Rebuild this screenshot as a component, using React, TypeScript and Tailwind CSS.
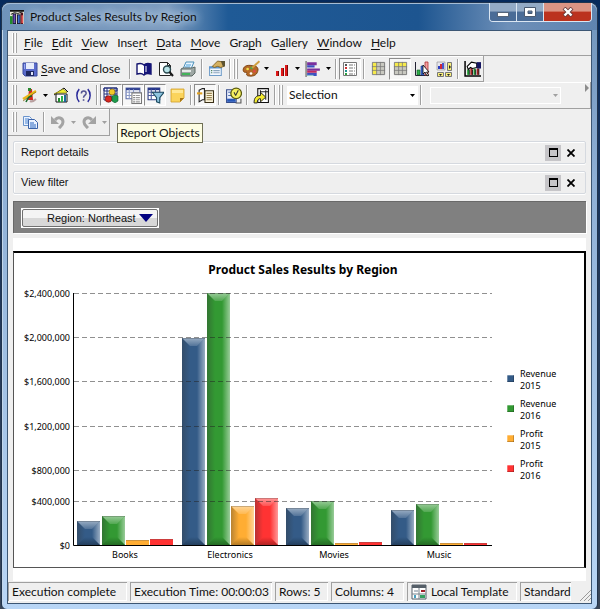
import type { ReactNode } from 'react';
import { clsx } from 'clsx';

const MENUS = [
  { before: '', key: 'F', after: 'ile' },
  { before: '', key: 'E', after: 'dit' },
  { before: '', key: 'V', after: 'iew' },
  { before: 'Inse', key: 'r', after: 't' },
  { before: '', key: 'D', after: 'ata' },
  { before: '', key: 'M', after: 'ove' },
  { before: 'Gra', key: 'p', after: 'h' },
  { before: 'G', key: 'a', after: 'llery' },
  { before: '', key: 'W', after: 'indow' },
  { before: '', key: 'H', after: 'elp' },
];

const SERIES = [
  { name: 'Revenue', year: '2015', color: '#345b87' },
  { name: 'Revenue', year: '2016', color: '#339933' },
  { name: 'Profit', year: '2015', color: '#ffad33' },
  { name: 'Profit', year: '2016', color: '#ff3333' },
];

const GRID = [
  { y: 8, label: '$2,400,000' },
  { y: 52, label: '$2,000,000' },
  { y: 96, label: '$1,600,000' },
  { y: 141, label: '$1,200,000' },
  { y: 185, label: '$800,000' },
  { y: 216, label: '$400,000' },
];

const BASE = 260;

const GROUPS = [
  { name: 'Books', x: 63, heights: [24, 29, 5, 6] },
  { name: 'Electronics', x: 168, heights: [207, 252, 39, 47] },
  { name: 'Movies', x: 272, heights: [37, 44, 2, 3] },
  { name: 'Music', x: 377, heights: [35, 41, 2, 2] },
];

function Icon({ children, className = 'size-4' }: { children: ReactNode; className?: string }) {
  return (
    <svg viewBox="0 0 16 16" className={clsx('shrink-0', className)} fill="none" aria-hidden="true">
      {children}
    </svg>
  );
}

function AppIcon() {
  return (
    <Icon className="size-[14px]">
      <path d="M0 0h16v16H0z" fill="#e8e8d8" />
      <path d="M0 0h16v2H0z" fill="#111" />
      <path d="M0 7h3v9H0z" fill="#1e8a2c" />
      <path d="M3 4h4v12H3z" fill="#181830" />
      <path d="M4 5h2v10H4z" fill="#6a4ab8" />
      <path d="M8 5h4v11H8z" fill="#181830" />
      <path d="M9 6h2v9H9z" fill="#3f6fd0" />
      <path d="M12 3h3v13h-3z" fill="#4a1018" />
      <path d="M13 6h2v9h-2z" fill="#e05050" />
      <path d="M1 5l4-2 4 1 5-2" stroke="#111" />
    </Icon>
  );
}

function SaveIcon() {
  return (
    <Icon>
      <path d="M1 2h14v13H3l-2-2z" fill="#5a6ccc" stroke="#3a4a9e" />
      <path d="M4 2h8v6H4z" fill="#e6ecfb" />
      <path d="M4 10h8v5H4z" fill="#1e285f" />
      <path d="M9 11h2v3H9z" fill="#dfe5fa" />
      <path d="M2 3h1v5H2z" fill="#9aaaf0" />
    </Icon>
  );
}

function BookIcon() {
  return (
    <Icon>
      <path d="M1 3c3-1 5-1 7 1 2-2 4-2 7-1v10c-3-1-5-1-7 1-2-2-4-2-7-1z" fill="#fff" stroke="#14146e" strokeWidth="1.4" />
      <path d="M8 4c2-2 4-2 7-1v10c-3-1-5-1-7 1z" fill="#14147a" />
      <path d="M10 5v6" stroke="#fff" />
    </Icon>
  );
}

function PreviewIcon() {
  return (
    <Icon>
      <path d="M1.500 1.500h8l3 3v10h-11z" fill="#fff" stroke="#222" />
      <path d="M9.500 1.500v3h3" stroke="#222" />
      <circle cx="9" cy="8.500" r="3.500" fill="#b9e4e8" stroke="#2c4a50" strokeWidth="1.400" />
      <path d="M11.500 11l3.500 4" stroke="#1a1a1a" strokeWidth="2" />
    </Icon>
  );
}

function PrintIcon() {
  return (
    <Icon>
      <path d="M6 1h8l-3 7H3z" fill="#e8f4ff" stroke="#4a90b8" />
      <path d="M6 4h5M5 6h5" stroke="#48a0d8" />
      <path d="M1 8l2-1h9l3-1v6l-3 3H1z" fill="#9ea7a4" stroke="#5c6864" />
      <path d="M2 9h9v2H2z" fill="#e6ebe8" />
      <path d="M2 12h8v2H2z" fill="#43b45a" />
    </Icon>
  );
}

function PropertiesIcon() {
  return (
    <Icon className="size-[17px]">
      <path d="M1.500 6.500h11v8h-11z" fill="#f3f8ff" stroke="#6f9cc8" />
      <path d="M1 6h12v2H1z" fill="#5b95d0" />
      <path d="M5 10h6M5 12h6" stroke="#8aa4bd" />
      <path d="M3 10h1M3 12h1" stroke="#286a3c" />
      <path d="M6 4l3-3 6 1v4l-3 1-3-1-3 1-2-1z" fill="#d4b060" stroke="#7a5c20" strokeWidth=".8" />
      <path d="M12 1h4v5h-2z" fill="#5d5330" />
    </Icon>
  );
}

function PaletteIcon() {
  return (
    <Icon className="size-[18px]">
      <path d="M1 9c0-3 3-5 8-4 4 0 6 2 5 5-1 4-5 5-9 4-2-1 0-2-1-3-1 0-3 0-3-2z" fill="#b56a28" stroke="#7b4212" strokeWidth=".8" />
      <circle cx="5" cy="8" r="1.200" fill="#f1e14c" />
      <circle cx="8.500" cy="7" r="1.200" fill="#48a848" />
      <circle cx="11" cy="10" r="1.200" fill="#e04848" />
      <circle cx="8" cy="12" r="1.200" fill="#fff" />
      <path d="M15.500 1L9 7" stroke="#d0a040" strokeWidth="1.800" />
    </Icon>
  );
}

function RedBarsIcon() {
  return (
    <Icon>
      <path d="M2 10h3v5H2zM7 7h3v8H7zM11 4h3v11h-3z" fill="#e01818" />
      <path d="M4 10h1v5H4zM9 7h1v8H9zM13 4h1v11h-1z" fill="#7a0808" />
    </Icon>
  );
}

function HBarsIcon() {
  return (
    <Icon className="size-[17px]">
      <path d="M1 1v15" stroke="#555" />
      <path d="M2 2h9v3H2zM2 8h12v2H2z" fill="#7a2f9c" />
      <path d="M2 5h7v2H2zM2 12h9v3H2z" fill="#3c4fc0" />
      <path d="M2 10h9v2H2z" fill="#c02a60" />
      <path d="M2 14h6v1H2z" fill="#9cc" />
    </Icon>
  );
}

function ListIcon() {
  return (
    <Icon>
      <path d="M1.500 1.500h13v13h-13z" fill="#fff" stroke="#777" />
      <path d="M3 3h2v2H3z" fill="#555" />
      <path d="M3 6h2v2H3z" fill="#d03030" />
      <path d="M3 9h2v2H3z" fill="#209090" />
      <path d="M3 12h2v2H3z" fill="#30a040" />
      <path d="M7 4h6M7 7h6M7 10h6M7 13h6" stroke="#777" strokeDasharray="4 1" />
    </Icon>
  );
}

function TableIcon({ header = false }: { header?: boolean }) {
  return (
    <Icon className="size-[15px]">
      <path d="M1.500 1.500h13v13h-13z" fill="#c8c8c0" stroke="#777" />
      <path d={header ? 'M2 2h12v4H2z' : 'M2 2h4v12H2z'} fill="#f6ea4a" />
      <path d="M1 6h14M1 10h14M6 1v14M10 1v14" stroke="#777" strokeWidth=".8" />
    </Icon>
  );
}

function PickIcon() {
  return (
    <Icon>
      <path d="M1.500 1v13.500H15" stroke="#223" />
      <path d="M3 9h3v5H3z" fill="#2fb04a" stroke="#0d5a22" strokeWidth=".6" />
      <path d="M7 5h3v9H7z" fill="#3d6cd8" stroke="#17307c" strokeWidth=".6" />
      <path d="M11 1h3v13h-3z" fill="#f2a0a0" stroke="#b03030" strokeWidth=".8" />
      <path d="M9 4v9l2-2 2 4 1.500-1-2-3H15z" fill="#fff" stroke="#000" strokeWidth=".8" />
    </Icon>
  );
}

function LayoutIcon() {
  return (
    <Icon>
      <path d="M1 1h8v8H1z" fill="#e6e6ee" stroke="#888" strokeWidth=".6" />
      <path d="M2 5h2v3H2z" fill="#2a3cc0" />
      <path d="M4 3h2v5H4z" fill="#d02838" />
      <path d="M6 2h2v6H6z" fill="#4858d0" />
      <path d="M11.500 1.500h4v8h-4zM1.500 11.500h6v4h-6zM9.500 11.500h6v4h-6z" fill="#f7ee7a" stroke="#777" />
      <path d="M13 4l2 2-2 2zM3 13h3l-1.500 2zM11 13h3l-1.500 2z" fill="#222" />
    </Icon>
  );
}

function HandChartIcon() {
  return (
    <Icon className="size-[17px]">
      <path d="M1 1v14h15" stroke="#000" strokeWidth="1.400" />
      <path d="M3 9h2v5H3z" fill="#1c9a30" />
      <path d="M6 7h2v7H6z" fill="#a02020" />
      <path d="M9 8h2v6H9z" fill="#208a30" />
      <path d="M12 8h2v6h-2z" fill="#a02020" />
      <path d="M5 9v5M8 9v5M11 9v5M14 8v6" stroke="#111" strokeWidth=".8" />
      <path d="M3 6l4-4 5 1v4l-4 1-2-1-2 2z" fill="#fff" stroke="#000" />
      <path d="M12 2h4v6h-4z" fill="#151560" />
    </Icon>
  );
}

function WizardIcon() {
  return (
    <Icon>
      <path d="M7 2h3l1 11H6z" fill="#d02a20" />
      <path d="M6 1h3v3H6z" fill="#2a8a30" />
      <path d="M1 12L14 4" stroke="#e8b818" strokeWidth="2.400" />
      <path d="M1 14L14 5" stroke="#7a5a08" strokeWidth=".7" />
      <path d="M4 15c2-4 3-6 6-6" stroke="#186a28" strokeWidth="1.600" />
      <path d="M8 14c2 1 4 0 6-2" stroke="#b8a0a0" strokeWidth="2" />
    </Icon>
  );
}

function HouseChartIcon() {
  return (
    <Icon>
      <path d="M3 7h11v8H3z" fill="#fff" stroke="#111" />
      <path d="M1 8l10-7 4 4" stroke="#111" strokeWidth="1" />
      <path d="M1 7l9-5 4 3-1 1H4z" fill="#f0ee30" stroke="#77700c" strokeWidth=".6" />
      <path d="M5 11h2v4H5z" fill="#208a30" />
      <path d="M8 9h2v6H8z" fill="#2fb04a" />
      <path d="M11 8h2v7h-2z" fill="#1b6a9a" />
    </Icon>
  );
}

function HelpIcon() {
  return (
    <Icon className="size-[17px]">
      <path d="M4 2C1 5 1 11 4 14M12 2c3 3 3 9 0 12" stroke="#2a2a9a" strokeWidth="1.400" />
      <path d="M6 6c0-3 4.500-3 4.500 0 0 1.500-2.500 1.800-2.500 4" stroke="#555592" strokeWidth="1.400" />
      <path d="M7.300 11.500h1.500v1.500H7.300z" fill="#555592" />
    </Icon>
  );
}

function ObjectsIcon() {
  return (
    <Icon>
      <path d="M1 1h13v12H1z" fill="#fff" stroke="#222a6a" />
      <path d="M1 1h13v3H1zM4 1v12M8 1v12M12 1v12M1 7h13M1 10h13" stroke="#223080" />
      <circle cx="9" cy="5" r="3" fill="#f0c828" stroke="#806008" strokeWidth=".6" />
      <circle cx="5.500" cy="12" r="3.300" fill="#d82820" stroke="#6a0c08" strokeWidth=".6" />
      <path d="M9 9l3-1 3 1v5l-3 2-3-2z" fill="#1f9a4c" stroke="#0c5a28" strokeWidth=".6" />
    </Icon>
  );
}

function DetailsIcon() {
  return (
    <Icon className="size-[17px]">
      <path d="M1 1h13v10H1z" fill="#fff" stroke="#5a6aa8" />
      <path d="M1 1h13v2H1z" fill="#2f4090" />
      <path d="M4 2v9M8 2v4M1 5h13M1 8h5" stroke="#8a9ac8" />
      <path d="M6.500 5.500h9v10h-9z" fill="#fff" stroke="#777" />
      <path d="M8 8h1M8 10h1M8 12h1M8 14h1" stroke="#333" />
      <path d="M10 8h4M10 10h4M10 12h4M10 14h4" stroke="#999" />
    </Icon>
  );
}

function FilterIcon() {
  return (
    <Icon className="size-[17px]">
      <path d="M1 1h11v11H1z" fill="#fff" stroke="#2a3a80" />
      <path d="M1 1h11v2H1z" fill="#24348a" />
      <path d="M4 2v10M8 2v4M1 5h11M1 8h6" stroke="#4a5a9a" />
      <path d="M5 5h11l-4 5v5l-3-1v-4z" fill="#8ec4de" stroke="#1c4a60" />
    </Icon>
  );
}

function NoteIcon() {
  return (
    <Icon>
      <path d="M2 2h13v9l-4 4H2z" fill="#fbd45c" stroke="#d0a028" strokeWidth=".8" />
      <path d="M15 11l-4 4v-4z" fill="#a87818" />
      <path d="M3 3h11v3H3z" fill="#ffe896" />
    </Icon>
  );
}

function NotebookIcon() {
  return (
    <Icon className="size-[17px]">
      <path d="M2 3l3-1.500h2V12H5l-3 2z" fill="#fff" stroke="#222" />
      <path d="M7.500 3.500h8v11h-8z" fill="#fbf4dc" stroke="#3a3018" />
      <path d="M9 6h5M9 8h5M9 10h5M9 12h5" stroke="#9a8450" />
      <path d="M0 6h5" stroke="#e0a020" strokeWidth="2" />
    </Icon>
  );
}

function ClockIcon() {
  return (
    <Icon className="size-[17px]">
      <path d="M1.500 2.500h9v12h-9z" fill="#e8eefc" stroke="#334a88" />
      <path d="M2 11h8v3H2z" fill="#2858b8" />
      <path d="M3 5h4M3 8h3" stroke="#5070b0" />
      <path d="M10 15h5v-4" stroke="#555" />
      <circle cx="10.500" cy="6" r="5" fill="#f6f060" stroke="#5a5a10" strokeWidth="1.200" />
      <path d="M10 8l2.500-5M10 8L8.500 5" stroke="#333" />
    </Icon>
  );
}

function RefreshDocIcon() {
  return (
    <Icon className="size-[17px]">
      <path d="M4.500 1.500h10v13h-10z" fill="#fff" stroke="#111" />
      <path d="M7.500 4.500h7M7 3v4M12 3v9" stroke="#222" />
      <path d="M1 15c0-5 2-7 6-7V5l5 4.500L7 14v-3c-2 0-3 1-3 4z" fill="#f4ec30" stroke="#222" strokeWidth=".9" />
    </Icon>
  );
}

function CopyIcon() {
  return (
    <Icon>
      <path d="M1.500 2.500h6l2 2v7h-8z" fill="#eaf2ff" stroke="#6a94cc" />
      <path d="M3 5h4M3 7h5M3 9h4" stroke="#4c86d0" />
      <path d="M6.500 5.500h6l3 3v6h-9z" fill="#eaf2ff" stroke="#3a62a8" />
      <path d="M8 9h4M8 11h6M8 13h6" stroke="#2a66c0" />
    </Icon>
  );
}

function UndoIcon({ flip = false }: { flip?: boolean }) {
  return (
    <Icon>
      <g transform={flip ? 'matrix(-1 0 0 1 16 0)' : undefined}>
        <path d="M5 6c3-4 8-2 8 2 0 3-2 4-4 6" stroke="#a3a3a3" strokeWidth="3" />
        <path d="M1 2v8h8z" fill="#a3a3a3" />
      </g>
    </Icon>
  );
}

function TemplateIcon() {
  return (
    <Icon>
      <path d="M1 1h14v14H1z" fill="#fff" stroke="#555f68" />
      <path d="M1 1h14v3H1z" fill="#555f68" />
      <path d="M8 4v11M1 10h14" stroke="#78828a" />
      <path d="M10 6h4v2h-4z" fill="#a02028" />
      <path d="M3 6h4v2H3z" fill="#b8c0c8" />
      <path d="M3 11h2v3H3z" fill="#48a0c0" />
      <path d="M9 11h5v3H9z" fill="#34a060" />
    </Icon>
  );
}

function Grip() {
  return (
    <span className="mr-0.5 flex h-5 w-[5px] shrink-0 justify-between">
      <span className="w-0.5 border-l border-white bg-[#a5a5a5]" />
      <span className="w-0.5 border-l border-white bg-[#a5a5a5]" />
    </span>
  );
}

function Separator() {
  return <span className="mx-0.5 h-5 w-0.5 shrink-0 border-r border-white bg-[#a0a0a0]" />;
}

function Arrow({ disabled = false }: { disabled?: boolean }) {
  return (
    <svg viewBox="0 0 7 4" className={clsx('h-[3px] w-[5px]', disabled ? 'fill-[#a0a0a0]' : 'fill-black')} aria-hidden="true">
      <path d="M0 0h7L3.500 4z" />
    </svg>
  );
}

type ToolProps = { label: string; children: ReactNode; pressed?: boolean; disabled?: boolean };

function Tool({ label, children, pressed = false, disabled = false }: ToolProps) {
  return (
    <button
      type="button"
      aria-label={label}
      disabled={disabled}
      className={clsx(
        'flex h-[22px] w-[22px] shrink-0 items-center justify-center',
        pressed && 'border border-r-white border-b-white border-l-[#8c8c8c] border-t-[#8c8c8c] bg-[#f7f7f7]',
      )}
    >
      {children}
    </button>
  );
}

function DropArrow({ label, disabled = false }: { label: string; disabled?: boolean }) {
  return (
    <button type="button" aria-label={label} disabled={disabled} className="flex h-[22px] w-[9px] shrink-0 items-center justify-center">
      <Arrow disabled={disabled} />
    </button>
  );
}

function ToolGroup({ children, className }: { children: ReactNode; className?: string }) {
  return (
    <div className={clsx('flex items-center border-b border-[#a0a0a0] pl-1 shadow-[inset_0_1px_0_#fff]', className)}>{children}</div>
  );
}

function Panel({ title }: { title: string }) {
  return (
    <section className="flex h-[23px] items-center rounded-xs border border-[#d5d9df] pl-[7px] pr-1.5 shadow-[inset_1px_1px_0_#fff,0_1px_0_#fff]">
      <h2 className="flex-1 font-['Liberation_Sans',sans-serif] text-[11px]">{title}</h2>
      <button type="button" aria-label={`Maximize ${title}`} className="flex size-4 items-center justify-center bg-[#c6c5c8]">
        <span className="h-[9px] w-[9px] border border-t-2 border-black" />
      </button>
      <button type="button" aria-label={`Close ${title}`} className="ml-0.5 flex size-4 items-center justify-center">
        <svg viewBox="0 0 8 8" className="size-2" fill="none" stroke="#000" strokeWidth="1.800">
          <path d="M.5.500l7 7M7.500.500l-7 7" />
        </svg>
      </button>
    </section>
  );
}

function Bar({ x, height, color }: { x: number; height: number; color: string }) {
  const w = 23;
  const y = BASE - height;
  const d = Math.min(8, height / 2);
  if (height < 8) {
    return (
      <g>
        <rect x={x} y={y} width={w} height={height} fill={color} />
        <rect x={x} y={y} width={w} height={1} fill="#555" opacity=".3" />
      </g>
    );
  }
  return (
    <g>
      <rect x={x} y={y} width={w} height={height} fill={color} />
      <polygon points={`${x},${y} ${x + d},${y + d} ${x + d},${BASE - d} ${x},${BASE}`} fill="url(#bevel-left)" />
      <polygon points={`${x + w},${y} ${x + w - d},${y + d} ${x + w - d},${BASE - d} ${x + w},${BASE}`} fill="url(#bevel-right)" />
      <polygon points={`${x},${y} ${x + w},${y} ${x + w - d},${y + d} ${x + d},${y + d}`} fill="url(#bevel-top)" />
      <polygon points={`${x},${BASE} ${x + w},${BASE} ${x + w - d},${BASE - d} ${x + d},${BASE - d}`} fill="url(#bevel-bottom)" />
      <rect x={x} y={y} width={w} height={1} fill="#000" opacity=".2" />
    </g>
  );
}

function SalesChart() {
  return (
    <svg viewBox="0 0 478 282" className="min-w-0 flex-1 font-['Noto_Sans',sans-serif] text-[9px]" role="img" aria-label="Product sales by region">
      <defs>
        <linearGradient id="bevel-left">
          <stop offset="0" stopColor="#333" stopOpacity=".35" />
          <stop offset="1" stopColor="#333" stopOpacity="0" />
        </linearGradient>
        <linearGradient id="bevel-right">
          <stop offset="0" stopColor="#fff" stopOpacity="0" />
          <stop offset="1" stopColor="#fff" stopOpacity=".5" />
        </linearGradient>
        <linearGradient id="bevel-top" x2="0" y2="1">
          <stop offset="0" stopColor="#fff" stopOpacity=".5" />
          <stop offset="1" stopColor="#fff" stopOpacity=".15" />
        </linearGradient>
        <linearGradient id="bevel-bottom" x2="0" y2="1">
          <stop offset="0" stopColor="#000" stopOpacity="0" />
          <stop offset="1" stopColor="#000" stopOpacity=".3" />
        </linearGradient>
      </defs>
      {GROUPS.map((group) => (
        <g key={group.name}>
          {group.heights.map((height, i) => (
            <Bar key={i} x={group.x + i * 24 + (i ? 1 : 0)} height={height} color={SERIES[i].color} />
          ))}
          <text x={group.x + 48} y={BASE + 13} textAnchor="middle">
            {group.name}
          </text>
        </g>
      ))}
      {GRID.map((line) => (
        <g key={line.label}>
          <path d={`M60 ${line.y + 0.5}H478`} stroke="#222" strokeOpacity=".5" strokeDasharray="5 3" />
          <text x="56" y={line.y + 4} textAnchor="end">
            {line.label}
          </text>
        </g>
      ))}
      <text x="56" y={BASE + 4} textAnchor="end">
        $0
      </text>
      <path d={`M59.500 8V${BASE + 0.5}H478`} stroke="#000" fill="none" />
    </svg>
  );
}

function StatusCell({ children, className }: { children: ReactNode; className?: string }) {
  return (
    <div className={clsx('flex h-[19px] items-center gap-1 overflow-hidden whitespace-nowrap border-l border-t border-[#a0a0a0] pl-[3px] shadow-[inset_-1px_-1px_0_#fff]', className)}>
      {children}
    </div>
  );
}

export default function App() {
  return (
    <div className="bg-[#10284a] bg-linear-to-b from-[#062a5c] to-[#3a4658] pt-0.5 pr-0.5 pl-px font-['Lato',sans-serif] text-[12px] text-[#111]">
      <div className="rounded-t-lg rounded-b-md border border-[#20344e] bg-linear-to-b from-[#6f93ba] via-[#8fb0d6] via-30% to-[#b9d6f6] shadow-[inset_1px_1px_0_#c3d6ea]">
        <header className="flex h-[27px] items-center rounded-t-lg bg-linear-[90deg,#6f93ba_0%,#7c9cc0_28%,#1f5a96_38%,#1d5590_70%,#6d8fb8_85%,#5f84b0_100%] pl-2 pr-[5px] shadow-[inset_0_1px_0_#a5bdd6]">
          <AppIcon />
          <h1 className="ml-1.5 [text-shadow:0_0_8px_#dce9f6,0_0_10px_#c5d8ec]">Product Sales Results by Region</h1>
          <div className="ml-auto flex h-[19px] self-start overflow-hidden rounded-b border border-t-0 border-[#dbe6f2]">
            <button type="button" aria-label="Minimize" className="flex w-[27px] items-center justify-center border-r border-[#dbe6f2] bg-linear-to-b from-[#94abc6] from-45% to-[#4a6c97] to-50%">
              <span className="mt-1 h-[5px] w-3 border border-[#55657a] bg-white" />
            </button>
            <button type="button" aria-label="Restore" className="flex w-[27px] items-center justify-center border-r border-[#dbe6f2] bg-linear-to-b from-[#94abc6] from-45% to-[#4a6c97] to-50%">
              <svg viewBox="0 0 12 10" className="h-[10px] w-3" fill="#fff" stroke="#4a5a70">
                <path d="M.5.500h11v9H.500zM4 4h4v2.500H4z" fillRule="evenodd" />
              </svg>
            </button>
            <button type="button" aria-label="Close" className="flex w-[47px] items-center justify-center bg-linear-to-b from-[#dc9484] from-45% to-[#bb321e] to-50%">
              <svg viewBox="0 0 12 10" className="h-[10px] w-3" fill="none">
                <path d="M2 1l8 8M10 1L2 9" stroke="#6a3a3a" strokeWidth="4" />
                <path d="M2.500 1.500l7 7M9.500 1.500l-7 7" stroke="#fff" strokeWidth="2.400" />
              </svg>
            </button>
          </div>
        </header>

        <div className="mx-[5px] mb-[5px] border border-[#3c5674] bg-[#efefef]">
          <nav className="flex h-[25px] items-center border-b border-[#a0a0a0] pl-1">
            <Grip />
            <div className="ml-[5px] flex gap-[9px]">
              {MENUS.map((menu) => (
                <button key={menu.before + menu.key + menu.after} type="button">
                  {menu.before}
                  <span className="underline underline-offset-2">{menu.key}</span>
                  {menu.after}
                </button>
              ))}
            </div>
          </nav>

          <ToolGroup className="h-[26px] w-fit border-r">
            <Grip />
            <button type="button" className="ml-[3px] mr-0.5 flex h-[22px] w-[103px] shrink-0 items-center gap-[3px] whitespace-nowrap">
              <SaveIcon />
              <span>
                <span className="underline underline-offset-2">S</span>ave and Close
              </span>
            </button>
            <Separator />
            <Tool label="Data dictionary"><BookIcon /></Tool>
            <Tool label="Print preview"><PreviewIcon /></Tool>
            <Tool label="Print"><PrintIcon /></Tool>
            <Separator />
            <Tool label="Properties"><PropertiesIcon /></Tool>
            <Separator />
            <Grip />
            <Tool label="Palette"><PaletteIcon /></Tool>
            <DropArrow label="Palette options" />
            <Tool label="Chart type"><RedBarsIcon /></Tool>
            <DropArrow label="Chart type options" />
            <Tool label="Bar orientation"><HBarsIcon /></Tool>
            <DropArrow label="Bar orientation options" />
            <Separator />
            <Tool label="Legend" pressed><ListIcon /></Tool>
            <Separator />
            <Tool label="Table columns"><TableIcon /></Tool>
            <Tool label="Table headers" pressed><TableIcon header /></Tool>
            <Tool label="Select chart item"><PickIcon /></Tool>
            <Tool label="Chart layout"><LayoutIcon /></Tool>
            <Separator />
            <Tool label="Customize chart"><HandChartIcon /></Tool>
          </ToolGroup>

          <ToolGroup className="h-[27px] border-r">
            <Grip />
            <Tool label="Wizard"><WizardIcon /></Tool>
            <DropArrow label="Wizard options" />
            <Tool label="Home report"><HouseChartIcon /></Tool>
            <Tool label="Help"><HelpIcon /></Tool>
            <Separator />
            <Tool label="Report Objects" pressed><ObjectsIcon /></Tool>
            <Tool label="Report details" pressed><DetailsIcon /></Tool>
            <Tool label="View filter" pressed><FilterIcon /></Tool>
            <Tool label="Notes"><NoteIcon /></Tool>
            <Separator />
            <Tool label="Page-by" pressed><NotebookIcon /></Tool>
            <Separator />
            <Tool label="Schedule"><ClockIcon /></Tool>
            <Separator />
            <Tool label="Re-execute"><RefreshDocIcon /></Tool>
            <Separator />
            <Grip />
            <div className="relative ml-0.5 flex w-[131px] shrink-0 items-center">
              <select aria-label="Style" className="h-[19px] w-full appearance-none bg-white pl-0.5 leading-4">
                <option>Selection</option>
              </select>
              <span className="pointer-events-none absolute right-[3px]">
                <Arrow />
              </span>
            </div>
            <Separator />
            <div className="relative ml-1.5 flex w-[131px] shrink-0 items-center">
              <select aria-label="Size" disabled className="h-[17px] w-full appearance-none border border-white bg-[#efefef]">
                <option></option>
              </select>
              <span className="pointer-events-none absolute right-[3px]">
                <Arrow disabled />
              </span>
            </div>
            <button type="button" aria-label="More tools" className="ml-auto mr-px mt-0.5 self-start">
              <svg viewBox="0 0 4 8" className="h-2 w-1 fill-[#8c8c8c]">
                <path d="M0 0l4 4-4 4z" />
              </svg>
            </button>
          </ToolGroup>

          <div className="relative">
            <ToolGroup className="h-[27px] w-fit border-r">
              <Grip />
              <Tool label="Copy"><CopyIcon /></Tool>
              <Separator />
              <Tool label="Undo" disabled><UndoIcon /></Tool>
              <DropArrow label="Undo history" disabled />
              <Tool label="Redo" disabled><UndoIcon flip /></Tool>
              <DropArrow label="Redo history" disabled />
            </ToolGroup>
            <div role="tooltip" className="absolute left-[109px] top-3.5 flex h-5 w-[86px] items-center justify-center whitespace-nowrap border border-[#6f6f55] bg-[#fdfde2]">
              Report Objects
            </div>
          </div>

          <main className="px-[5px]">
            <div className="mt-[5px] flex flex-col gap-[7px]">
              <Panel title="Report details" />
              <Panel title="View filter" />
            </div>

            <div className="mt-[7px] flex h-8 items-center border-t border-l border-[#696969] bg-[#808080] pl-[7px] shadow-[1px_1px_0_#fff]">
              <div className="relative flex w-[138px] items-center border border-white bg-white">
                <select aria-label="Region" className="h-[18px] w-full appearance-none rounded-xs border border-[#707070] bg-linear-to-b from-[#f4f4f4] from-50% to-[#d8d8d8] to-50% pl-6 font-['Liberation_Sans',sans-serif] text-[11px]">
                  <option>Region: Northeast</option>
                </select>
                <svg viewBox="0 0 14 8" className="pointer-events-none absolute right-[5px] h-2 w-3.5 fill-[#000080]" aria-hidden="true">
                  <path d="M0 0h14L7 8z" />
                </svg>
              </div>
            </div>

            <div className="mt-[5px] bg-white pt-[13px] pb-[13px]">
              <figure className="border border-t-2 border-r-2 border-black border-l-[#555] border-b-[#555]">
                <figcaption className="flex h-8 items-center justify-center pl-2 pt-0.5 font-['Noto_Sans',sans-serif] text-[12px] font-bold text-black">
                  Product Sales Results by Region
                </figcaption>
                <div className="flex">
                  <SalesChart />
                  <ul className="flex w-[92px] flex-col gap-1.5 pl-[15px] pt-[83px] font-['Noto_Sans',sans-serif] text-[9px] leading-[12px] text-black">
                    {SERIES.map((item) => (
                      <li key={item.name + item.year} className="flex items-start gap-1.5">
                        <svg viewBox="0 0 7 7" className="mt-[7px] size-[7px]" aria-hidden="true">
                          <path d="M0 0h7v7H0z" fill={item.color} />
                          <path d="M0 .5h7M.5 0v7" stroke="#fff" strokeOpacity=".3" />
                          <path d="M0 6.500h7M6.500 0v7" stroke="#000" strokeOpacity=".2" />
                        </svg>
                        <span>
                          {item.name}
                          <br />
                          {item.year}
                        </span>
                      </li>
                    ))}
                  </ul>
                </div>
              </figure>
            </div>
          </main>

          <footer className="flex gap-[3px] pt-px pb-0.5">
            <StatusCell className="w-[119px]">Execution complete</StatusCell>
            <StatusCell className="w-[142px]">Execution Time: 00:00:03</StatusCell>
            <StatusCell className="w-[53px]">Rows: 5</StatusCell>
            <StatusCell className="w-[73px]">Columns: 4</StatusCell>
            <StatusCell className="w-[110px]">
              <TemplateIcon />
              Local Template
            </StatusCell>
            <StatusCell className="w-[51px]">Standard</StatusCell>
            <svg viewBox="0 0 12 12" className="ml-auto size-3 self-end" fill="none" stroke="#9a9a9a" aria-hidden="true">
              <path d="M1 12L12 1M5 12l7-7M9 12l3-3" />
            </svg>
          </footer>
        </div>
      </div>
    </div>
  );
}
